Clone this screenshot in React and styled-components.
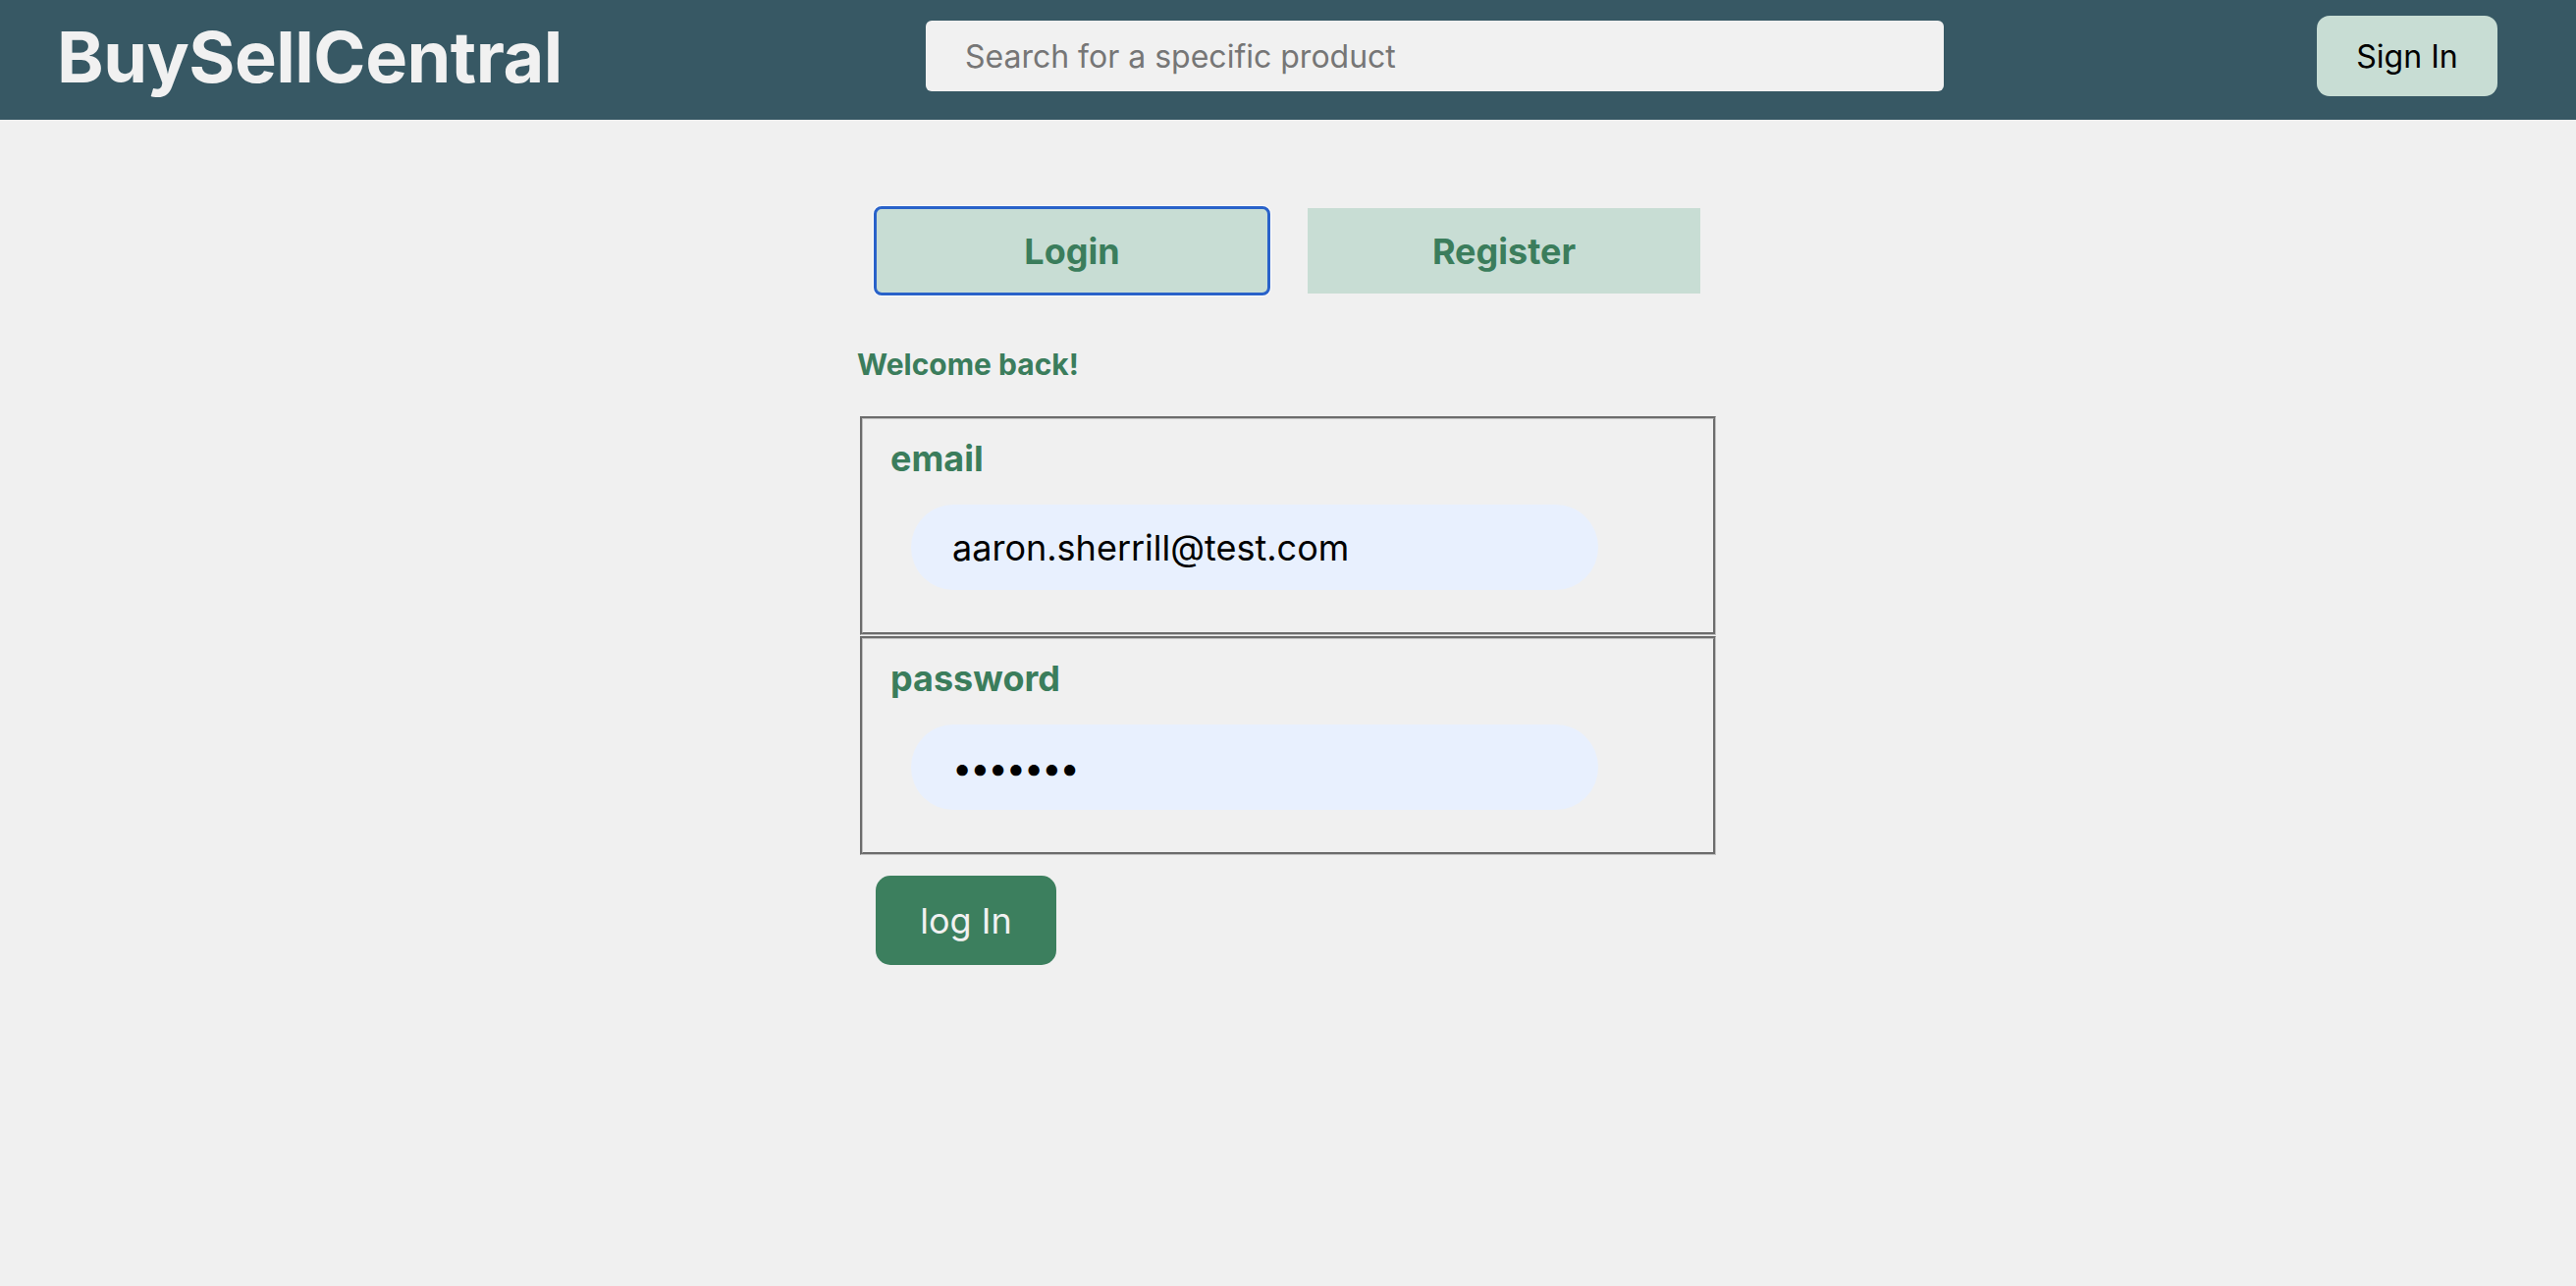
import React from "react";
import styled, { createGlobalStyle } from "styled-components";

const GlobalStyle = createGlobalStyle`
  body {
    margin: 0;
    background: #f0f0f0;
    font-family: Inter, "Noto Sans", sans-serif;
  }
  * {
    box-sizing: border-box;
  }
`;

const Header = styled.header`
  height: 122px;
  background: #375864;
  display: flex;
  align-items: center;
  justify-content: space-between;
  padding: 0 80px 8px 58px;
`;

const Logo = styled.h1`
  margin: 0;
  font-size: 72px;
  font-weight: 700;
  color: #f1f1f1;
  letter-spacing: -0.5px;
`;

const SearchInput = styled.input`
  width: 1037px;
  height: 72px;
  margin-right: 10px;
  border: none;
  border-radius: 6px;
  background: #f1f1f1;
  padding: 0 40px;
  font-family: inherit;
  font-size: 32px;
  color: #222;
  outline: none;

  &::placeholder {
    color: #767676;
  }
`;

const SignInButton = styled.button`
  width: 184px;
  height: 82px;
  border: none;
  border-radius: 13px;
  background: #c8ddd4;
  color: #000;
  font-family: inherit;
  font-size: 32px;
  cursor: pointer;
`;

const Main = styled.main`
  width: 872px;
  margin: 0 auto;
  padding-top: 90px;
`;

const Tabs = styled.div`
  display: flex;
  gap: 40px;
  padding: 0 16px;
`;

const Tab = styled.button`
  width: 400px;
  height: 87px;
  border: none;
  border-radius: ${(p) => (p.active ? "6px" : "0")};
  background: #c8ddd4;
  color: #3b7d5c;
  font-family: inherit;
  font-size: 36px;
  font-weight: 700;
  cursor: pointer;
  outline: ${(p) => (p.active ? "3px solid #2962c9" : "none")};
  outline-offset: -1px;
  box-shadow: ${(p) => (p.active ? "0 0 0 3px #fff" : "none")};
`;

const Welcome = styled.h3`
  margin: 54px 0 35px -3px;
  font-size: 30px;
  font-weight: 700;
  color: #3b7d5c;
`;

const Field = styled.fieldset`
  margin: 0 0 1px;
  border: 3px groove #c0c0c0;
  padding: 18px 0 43px 28px;
  min-width: 0;
`;

const Label = styled.label`
  display: block;
  font-size: 36px;
  line-height: 44px;
  font-weight: 700;
  color: #3b7d5c;
  margin-bottom: 25px;
`;

const TextInput = styled.input`
  display: block;
  width: 700px;
  height: 87px;
  margin-left: 21px;
  border: none;
  border-radius: 50px;
  background: #e8f0fe;
  padding: 0 42px;
  font-family: inherit;
  font-size: 36px;
  letter-spacing: ${(p) => (p.type === "password" ? "-2px" : "0")};
  color: #000;
  outline: none;
`;

const SubmitButton = styled.button`
  margin: 20px 0 0 16px;
  width: 184px;
  height: 91px;
  border: none;
  border-radius: 15px;
  background: #3c7f5e;
  color: #f1f1f1;
  font-family: inherit;
  font-size: 36px;
  cursor: pointer;
`;

export default function App() {
  return (
    <>
      <GlobalStyle />
      <Header>
        <Logo>BuySellCentral</Logo>
        <SearchInput placeholder="Search for a specific product" />
        <SignInButton>Sign In</SignInButton>
      </Header>
      <Main>
        <Tabs>
          <Tab active>Login</Tab>
          <Tab>Register</Tab>
        </Tabs>
        <Welcome>Welcome back!</Welcome>
        <form onSubmit={(e) => e.preventDefault()}>
          <Field>
            <Label htmlFor="email">email</Label>
            <TextInput
              id="email"
              type="email"
              defaultValue="aaron.sherrill@test.com"
            />
          </Field>
          <Field>
            <Label htmlFor="password">password</Label>
            <TextInput id="password" type="password" defaultValue="1234567" />
          </Field>
          <SubmitButton type="submit">log In</SubmitButton>
        </form>
      </Main>
    </>
  );
}
